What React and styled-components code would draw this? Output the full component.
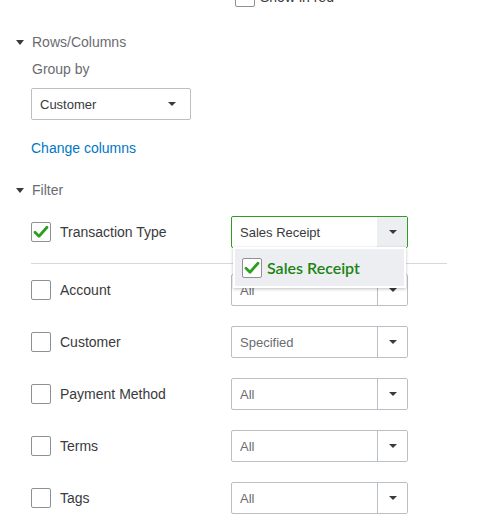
import styled, { createGlobalStyle } from 'styled-components'

const GlobalStyle = createGlobalStyle`
  html, body {
    margin: 0;
    padding: 0;
    background: #fff;
    overflow: hidden;
  }
  body {
    font-family: "Liberation Sans", Arial, sans-serif;
    color: #393a3d;
  }
`

const Panel = styled.div`
  width: 497px;
  height: 525px;
  overflow: hidden;
  padding-left: 16px;
  box-sizing: border-box;
`

const TopRow = styled.div`
  display: flex;
  align-items: center;
  gap: 5px;
  margin-top: -13px;
  margin-left: 219px;
  height: 20px;
  font-size: 14px;
`

const SectionHeader = styled.div`
  display: flex;
  align-items: center;
  gap: 8px;
  height: 20px;
  margin-top: ${({ $top }) => $top}px;
  font-size: 14px;
  color: #6b6c72;
`

const Caret = styled.span`
  width: 0;
  height: 0;
  border-left: ${({ $w }) => $w / 2}px solid transparent;
  border-right: ${({ $w }) => $w / 2}px solid transparent;
  border-top: ${({ $h }) => $h}px solid ${({ $color }) => $color || '#393a3d'};
`

const SectionBody = styled.div`
  padding-left: 15px;
`

const FieldLabel = styled.div`
  margin-top: 7px;
  padding-left: 1px;
  height: 20px;
  line-height: 20px;
  font-size: 14px;
  color: #6b6c72;
`

const GroupSelect = styled.div`
  margin-top: 9px;
  width: 160px;
  height: 32px;
  box-sizing: border-box;
  border: 1px solid #babec5;
  border-radius: 2px;
  display: flex;
  align-items: center;
  justify-content: space-between;
  padding: 0 14px 0 8px;
  font-size: 13px;
`

const LinkText = styled.a`
  display: block;
  margin-top: 18px;
  height: 20px;
  line-height: 20px;
  font-size: 14px;
  color: #0077c5;
  text-decoration: none;
  cursor: pointer;
`

const FilterList = styled.div`
  margin-top: 16px;
  display: flex;
  flex-direction: column;
  gap: 20px;
`

const FilterRow = styled.div`
  display: grid;
  grid-template-columns: 200px 177px;
  align-items: center;
  height: 32px;
`

const LabelCell = styled.label`
  display: flex;
  align-items: center;
  gap: 9px;
  font-size: 14px;
  color: #393a3d;
`

const Box = styled.span`
  width: 20px;
  height: 20px;
  box-sizing: border-box;
  border: 1px solid #8d9096;
  border-radius: 2px;
  background: #fff;
  display: inline-flex;
  align-items: center;
  justify-content: center;
  flex-shrink: 0;
`

const Divider = styled.hr`
  margin: -5px 0 -10px;
  width: 416px;
  border: none;
  border-top: 1px solid #d4d7dc;
`

const SelectWrap = styled.div`
  position: relative;
  height: 32px;
`

const Select = styled.div`
  height: 32px;
  box-sizing: border-box;
  border: 1px solid ${({ $active }) => ($active ? '#2ca01c' : '#babec5')};
  border-radius: 2px;
  display: flex;
  align-items: stretch;
  font-size: 13px;
  background: #fff;
`

const SelectValue = styled.div`
  flex: 1;
  display: flex;
  align-items: center;
  padding-left: 8px;
  color: ${({ $muted }) => ($muted ? '#6b6c72' : '#393a3d')};
`

const SelectButton = styled.div`
  width: 29px;
  display: flex;
  align-items: center;
  justify-content: center;
  border-left: 1px solid ${({ $active }) => ($active ? '#eceef1' : '#babec5')};
  background: ${({ $active }) => ($active ? '#eceef1' : '#fff')};
`

const Menu = styled.div`
  position: absolute;
  left: 2px;
  top: 31px;
  width: 173px;
  height: 41px;
  box-sizing: border-box;
  padding: 2px;
  background: #fff;
  box-shadow: 0 1px 3px rgba(0, 0, 0, 0.25);
  z-index: 2;
`

const MenuItem = styled.div`
  height: 37px;
  background: #eceef1;
  display: flex;
  align-items: center;
  gap: 5px;
  padding-left: 7px;
  font-family: Lato, "Liberation Sans", sans-serif;
  font-size: 16px;
  font-weight: 600;
  color: #1b8412;
`

function Check() {
  return (
    <svg width="18" height="18" viewBox="0 0 18 18">
      <path d="M3 9.2 L7 13.2 L15 4.2" fill="none" stroke="#2ca01c" strokeWidth="2.8" strokeLinecap="round" strokeLinejoin="round" />
    </svg>
  )
}

const filters = [
  { label: 'Account', value: 'All' },
  { label: 'Customer', value: 'Specified' },
  { label: 'Payment Method', value: 'All' },
  { label: 'Terms', value: 'All' },
  { label: 'Tags', value: 'All' },
]

export default function App() {
  return (
    <>
      <GlobalStyle />
      <Panel>
        <TopRow>
          <Box />
          <span>Show in red</span>
        </TopRow>

        <SectionHeader $top={25}>
          <Caret $w={9} $h={5} />
          Rows/Columns
        </SectionHeader>
        <SectionBody>
          <FieldLabel>Group by</FieldLabel>
          <GroupSelect>
            Customer
            <Caret $w={8} $h={4} />
          </GroupSelect>
          <LinkText>Change columns</LinkText>
        </SectionBody>

        <SectionHeader $top={22}>
          <Caret $w={9} $h={5} />
          Filter
        </SectionHeader>
        <SectionBody>
          <FilterList>
            <FilterRow>
              <LabelCell>
                <Box><Check /></Box>
                Transaction Type
              </LabelCell>
              <SelectWrap>
                <Select $active>
                  <SelectValue>Sales Receipt</SelectValue>
                  <SelectButton $active><Caret $w={8} $h={4} /></SelectButton>
                </Select>
                <Menu>
                  <MenuItem>
                    <Box><Check /></Box>
                    Sales Receipt
                  </MenuItem>
                </Menu>
              </SelectWrap>
            </FilterRow>
            <Divider />
            {filters.map((f) => (
              <FilterRow key={f.label}>
                <LabelCell>
                  <Box />
                  {f.label}
                </LabelCell>
                <SelectWrap>
                  <Select>
                    <SelectValue $muted>{f.value}</SelectValue>
                    <SelectButton><Caret $w={8} $h={4} /></SelectButton>
                  </Select>
                </SelectWrap>
              </FilterRow>
            ))}
          </FilterList>
        </SectionBody>
      </Panel>
    </>
  )
}
